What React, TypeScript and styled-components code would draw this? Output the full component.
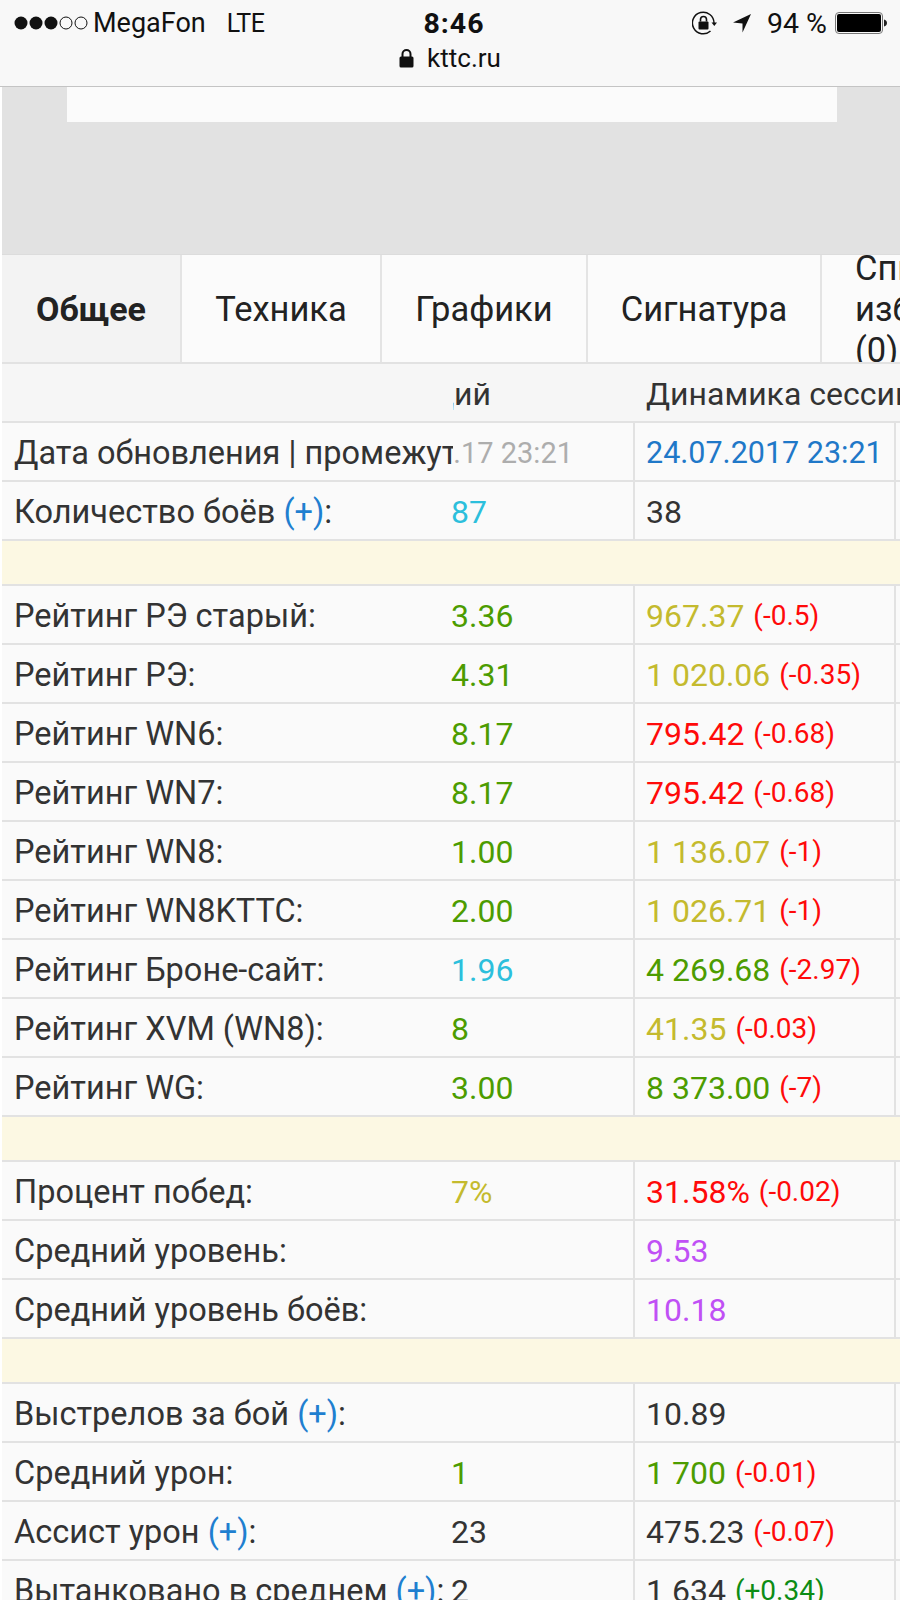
import React from 'react';
import styled, { createGlobalStyle } from 'styled-components';

const GlobalStyle = createGlobalStyle`
  html, body { margin: 0; padding: 0; background: #fff; }
  body { width: 900px; height: 1600px; overflow: hidden; font-family: Roboto, "Liberation Sans", sans-serif; }
`;

const Page = styled.div`
  width: 900px;
  height: 1600px;
  overflow: hidden;
  display: flex;
  flex-direction: column;
`;

// шапка браузера
const Bar = styled.header`
  height: 87px;
  box-sizing: border-box;
  flex: none;
  background: #f8f8f8;
  border-bottom: 1px solid #c4c4c4;
  color: #111;
  font-size: 26px;
`;

const StatusRow = styled.div`
  height: 46px;
  padding: 0 13px 0 14px;
  display: grid;
  grid-template-columns: 1fr auto 1fr;
  align-items: center;
`;

const Carrier = styled.div`
  display: flex;
  align-items: center;
  gap: 5px;
  font-size: 27px;
`;

const Network = styled.span`
  margin-left: 16px;
  font-size: 25px;
  letter-spacing: -0.5px;
`;

const Clock = styled.div`
  margin-left: 7px;
  font-size: 28.5px;
  font-weight: 700;
  letter-spacing: 1px;
`;

const StatusRight = styled.div`
  display: flex;
  align-items: center;
  justify-content: flex-end;
  gap: 15px;
  font-size: 28.5px;
`;

const Percent = styled.span`
  margin-right: -7px;
`;

const UrlRow = styled.div`
  display: flex;
  align-items: center;
  justify-content: center;
  gap: 13px;
  height: 26px;
  margin-top: -1px;
`;

const Content = styled.div`
  padding-left: 2px;
  display: flex;
  flex-direction: column;
`;

const AdArea = styled.div`
  height: 167px;
  flex: none;
  background: #e2e2e2;
  padding-left: 65px;
`;

const AdBox = styled.div`
  width: 770px;
  height: 35px;
  background: #fbfbfb;
`;

const Tabs = styled.nav`
  height: 108px;
  box-sizing: border-box;
  flex: none;
  display: flex;
  background: #fbfbfb;
  border-top: 1px solid #dcdcdc;
  overflow: hidden;
`;

const Tab = styled.div<{ $width: number; $active?: boolean }>`
  width: ${({ $width }) => $width}px;
  flex: none;
  box-sizing: border-box;
  display: flex;
  align-items: center;
  justify-content: center;
  border-right: 2px solid #e4e4e4;
  font-size: ${({ $active }) => ($active ? '34px' : '34.5px')};
  color: #222;
  font-weight: ${({ $active }) => ($active ? 700 : 400)};
  background: ${({ $active }) => ($active ? '#f3f3f3' : 'transparent')};
`;

const WrapTab = styled.div`
  flex: none;
  width: 170px;
  height: 107px;
  padding-left: 33px;
  font-size: 34.5px;
  line-height: 41px;
  color: #222;
  margin-top: -7px;
`;

const Table = styled.div`
  flex: none;
  color: #333;
  font-size: 32px;
`;

const Row = styled.div<{ $head?: boolean }>`
  height: 59px;
  box-sizing: border-box;
  display: grid;
  grid-template-columns: 451px 180px 261px 6px;
  border-bottom: 2px solid #e2e2e2;
  background: ${({ $head }) => ($head ? '#f6f6f6' : '#fafafa')};
`;

const HeadRow = styled(Row)`
  height: 61px;
  border-top: 2px solid #e2e2e2;
`;

const Section = styled.div`
  height: 45px;
  box-sizing: border-box;
  background: #fcf8e3;
  border-bottom: 2px solid #e2e2e2;
`;

const Label = styled.div`
  padding: 2px 0 0 12px;
  display: flex;
  align-items: center;
  font-size: 32.5px;
  white-space: nowrap;
  overflow: hidden;
`;

const Value = styled.div<{ $color?: string }>`
  margin-left: -2px;
  padding-top: 2px;
  display: flex;
  align-items: center;
  white-space: nowrap;
  color: ${({ $color }) => $color || '#333'};
`;

// текст уехал за левый край колонки
const ClippedValue = styled.div<{ $shift: number; $color?: string; $size: number }>`
  padding: 2px ${({ $shift }) => $shift}px 0 0;
  display: flex;
  align-items: center;
  justify-content: flex-end;
  white-space: nowrap;
  overflow: hidden;
  font-size: ${({ $size }) => $size}px;
  color: ${({ $color }) => $color || '#333'};
`;

const Session = styled.div<{ $color?: string; $small?: boolean }>`
  border-left: 2px solid #e2e2e2;
  padding: 2px 0 0 11px;
  display: flex;
  align-items: center;
  white-space: nowrap;
  overflow: hidden;
  font-size: ${({ $small }) => ($small ? '30.5px' : '32px')};
  color: ${({ $color }) => $color || '#333'};
`;

const HeadTitle = styled.div`
  padding: 2px 0 0 13px;
  display: flex;
  align-items: center;
  white-space: nowrap;
`;

const Tail = styled.div`
  border-left: 2px solid #e2e2e2;
`;

const Delta = styled.span<{ $color: string }>`
  margin-left: 9px;
  font-size: 28px;
  color: ${({ $color }) => $color};
`;

const More = styled.span`
  color: #1f7fd0;
`;

const C = {
  green: '#4c9c00',
  yellow: '#c4ba2e',
  red: '#ff0a0a',
  cyan: '#2cbfdc',
  purple: '#c050f5',
  blue: '#1f78c8',
  grey: '#adadad',
  up: '#0c8c14',
};

type RowData = {
  label: string;
  more?: boolean;
  value?: string;
  valueColor?: string;
  session?: string;
  sessionColor?: string;
  delta?: string;
};

const top: RowData[] = [
  { label: 'Количество боёв', more: true, value: '87', valueColor: C.cyan, session: '38' },
];

const ratings: RowData[] = [
  { label: 'Рейтинг РЭ старый:', value: '3.36', valueColor: C.green, session: '967.37', sessionColor: C.yellow, delta: '(-0.5)' },
  { label: 'Рейтинг РЭ:', value: '4.31', valueColor: C.green, session: '1 020.06', sessionColor: C.yellow, delta: '(-0.35)' },
  { label: 'Рейтинг WN6:', value: '8.17', valueColor: C.green, session: '795.42', sessionColor: C.red, delta: '(-0.68)' },
  { label: 'Рейтинг WN7:', value: '8.17', valueColor: C.green, session: '795.42', sessionColor: C.red, delta: '(-0.68)' },
  { label: 'Рейтинг WN8:', value: '1.00', valueColor: C.green, session: '1 136.07', sessionColor: C.yellow, delta: '(-1)' },
  { label: 'Рейтинг WN8KTTC:', value: '2.00', valueColor: C.green, session: '1 026.71', sessionColor: C.yellow, delta: '(-1)' },
  { label: 'Рейтинг Броне-сайт:', value: '1.96', valueColor: C.cyan, session: '4 269.68', sessionColor: C.green, delta: '(-2.97)' },
  { label: 'Рейтинг XVM (WN8):', value: '8', valueColor: C.green, session: '41.35', sessionColor: C.yellow, delta: '(-0.03)' },
  { label: 'Рейтинг WG:', value: '3.00', valueColor: C.green, session: '8 373.00', sessionColor: C.green, delta: '(-7)' },
];

const general: RowData[] = [
  { label: 'Процент побед:', value: '7%', valueColor: C.yellow, session: '31.58%', sessionColor: C.red, delta: '(-0.02)' },
  { label: 'Средний уровень:', session: '9.53', sessionColor: C.purple },
  { label: 'Средний уровень боёв:', session: '10.18', sessionColor: C.purple },
];

const battle: RowData[] = [
  { label: 'Выстрелов за бой', more: true, session: '10.89' },
  { label: 'Средний урон:', value: '1', valueColor: C.green, session: '1 700', sessionColor: C.green, delta: '(-0.01)' },
  { label: 'Ассист урон', more: true, value: '23', session: '475.23', delta: '(-0.07)' },
  { label: 'Вытанковано в среднем', more: true, value: '2', session: '1 634', delta: '(+0.34)' },
];

const StatRow = ({ row }: { row: RowData }) => (
  <Row>
    <Label>
      {row.label}
      {row.more && (
        <>
          &nbsp;<More>(+)</More>:
        </>
      )}
    </Label>
    <Value $color={row.valueColor}>{row.value}</Value>
    <Session $color={row.sessionColor}>
      {row.session}
      {row.delta && <Delta $color={row.delta.startsWith('(+') ? C.up : C.red}>{row.delta}</Delta>}
    </Session>
    <Tail />
  </Row>
);

const SignalDots = () => (
  <svg width="74" height="14" viewBox="0 0 74 14">
    <circle cx="7" cy="7" r="6.5" fill="#111" />
    <circle cx="22" cy="7" r="6.5" fill="#111" />
    <circle cx="37" cy="7" r="6.5" fill="#111" />
    <circle cx="52" cy="7" r="6" fill="none" stroke="#111" strokeWidth="1" />
    <circle cx="67" cy="7" r="6" fill="none" stroke="#111" strokeWidth="1" />
  </svg>
);

const RotationLock = () => (
  <svg width="25" height="24" viewBox="0 0 25 24">
    <path d="M18.5 20A10.800 10.800 0 1 1 22 12" fill="none" stroke="#111" strokeWidth="1.5" />
    <path d="M19.500 11.500h5.500l-2.700 3.500z" fill="#111" />
    <rect x="6.500" y="10.500" width="10" height="8" rx="1" fill="#111" />
    <path d="M8.500 10.500V8.500a3 3 0 0 1 6 0v2" fill="none" stroke="#111" strokeWidth="1.600" />
  </svg>
);

const LocationArrow = () => (
  <svg width="20" height="20" viewBox="0 0 20 20">
    <path d="M19 1L1 9.500L10.500 10.500L10.500 19.500z" fill="#111" />
  </svg>
);

const Battery = () => (
  <svg width="52" height="22" viewBox="0 0 52 22">
    <rect x="0.500" y="0.500" width="47" height="21" rx="3.500" fill="none" stroke="#777" />
    <rect x="2" y="2" width="44" height="18" rx="2" fill="#000" />
    <path d="M49 7.500c1.800 0.300 3 1.700 3 3.500s-1.200 3.200-3 3.500z" fill="#222" />
  </svg>
);

const Padlock = () => (
  <svg width="15" height="19" viewBox="0 0 15 19">
    <rect x="0.500" y="7.500" width="14" height="11" rx="1.500" fill="#111" />
    <path d="M3.500 8V5a4 4 0 0 1 8 0v3" fill="none" stroke="#111" strokeWidth="2" />
  </svg>
);

const App: React.FC = () => (
  <Page>
    <GlobalStyle />
    <Bar>
      <StatusRow>
        <Carrier>
          <SignalDots />
          MegaFon
          <Network>LTE</Network>
        </Carrier>
        <Clock>8:46</Clock>
        <StatusRight>
          <RotationLock />
          <LocationArrow />
          <Percent>94 %</Percent>
          <Battery />
        </StatusRight>
      </StatusRow>
      <UrlRow>
        <Padlock />
        kttc.ru
      </UrlRow>
    </Bar>
    <Content>
      <AdArea>
        <AdBox />
      </AdArea>
      <Tabs>
        <Tab $width={180} $active>Общее</Tab>
        <Tab $width={200}>Техника</Tab>
        <Tab $width={206}>Графики</Tab>
        <Tab $width={234}>Сигнатура</Tab>
        <WrapTab>Список избранных (0)</WrapTab>
      </Tabs>
      <Table>
        <HeadRow $head>
          <Label />
          <ClippedValue $shift={142} $size={32}>Общий</ClippedValue>
          <HeadTitle>Динамика сессии</HeadTitle>
        </HeadRow>
        <Row>
          <Label>Дата обновления | промежуток</Label>
          <ClippedValue $shift={60} $size={29} $color={C.grey}>24.07.17 23:21</ClippedValue>
          <Session $small $color={C.blue}>24.07.2017 23:21</Session>
          <Tail />
        </Row>
        {top.map((r) => <StatRow key={r.label} row={r} />)}
        <Section />
        {ratings.map((r) => <StatRow key={r.label} row={r} />)}
        <Section />
        {general.map((r) => <StatRow key={r.label} row={r} />)}
        <Section />
        {battle.map((r) => <StatRow key={r.label} row={r} />)}
      </Table>
    </Content>
  </Page>
);

export default App;
